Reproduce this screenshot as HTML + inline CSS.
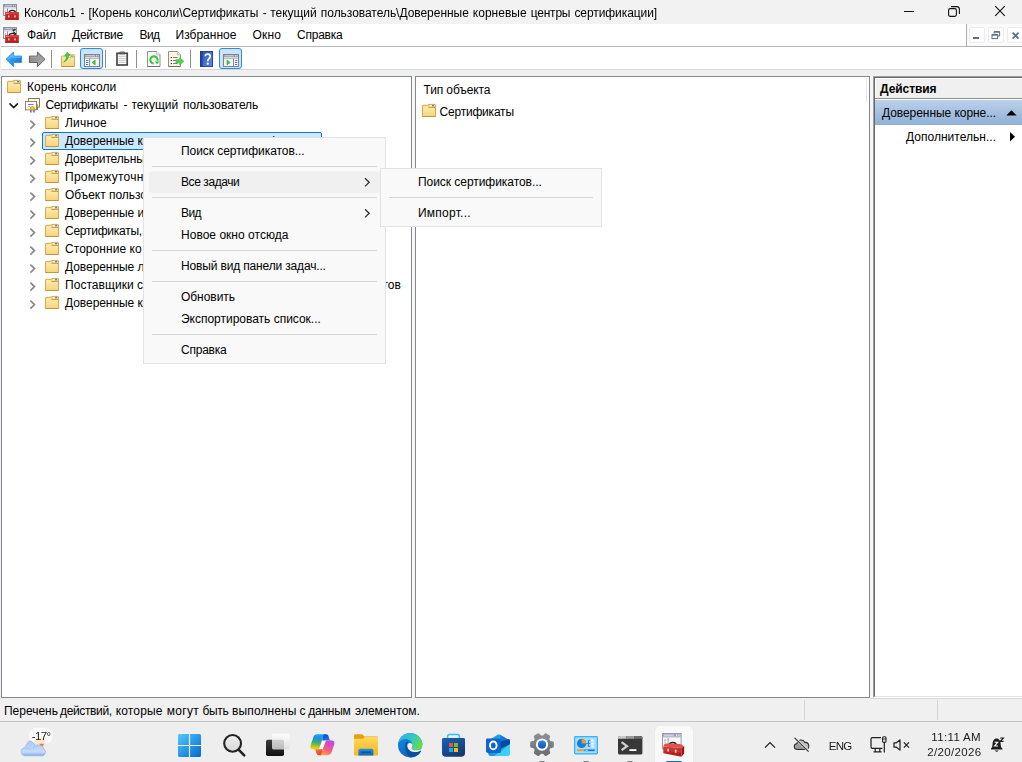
<!DOCTYPE html>
<html>
<head>
<meta charset="utf-8">
<title>mmc</title>
<style>
html,body{margin:0;padding:0;}
body{width:1022px;height:762px;overflow:hidden;background:#f0f0f0;font-family:"Liberation Sans",sans-serif;font-size:12px;color:#000;position:relative;}
.abs{position:absolute;}
.g{filter:grayscale(1);}
.t{position:absolute;white-space:nowrap;line-height:14px;height:14px;color:#000;}
#titlebar{left:0;top:0;width:1022px;height:24px;background:#f2f2f2;}
#menubar{left:1px;top:24px;width:1021px;height:22px;background:#fff;}
#menuline{left:1px;top:46px;width:966px;height:1px;background:#b9b9b9;}
#toolbar{left:1px;top:47px;width:1021px;height:22px;background:#fff;border-bottom:1px solid #d5d5d5;}
.pane{position:absolute;background:#fff;border:1px solid #828790;box-sizing:border-box;overflow:hidden;}
#left{left:1px;top:76px;width:411px;height:622px;}
#mid{left:415px;top:76px;width:455px;height:622px;}
#right{left:873px;top:76px;width:151px;height:622px;border:1px solid #a0a0a0;border-bottom-color:#fff;}
#status{left:0;top:700px;width:1022px;height:21px;background:#f0f0f0;}
#taskbar{left:0;top:721px;width:1022px;height:41px;background:#eeeeee;border-top:1px solid #c4c4c4;box-sizing:border-box;}
.menu{position:absolute;background:#f9f9f9;border:1px solid #e2e2e2;box-sizing:border-box;}
.sep{position:absolute;height:1px;background:#d7d7d7;}
svg{position:absolute;overflow:visible;}
</style>
</head>
<body>
<div id="titlebar" class="abs"></div>
<div id="menubar" class="abs"></div>
<div id="menuline" class="abs"></div>
<div id="toolbar" class="abs"></div>
<div id="left" class="pane"></div>
<div id="mid" class="pane"></div>
<div id="right" class="pane"></div>
<div class="abs" style="left:874px;top:77px;width:150px;height:620px;box-sizing:border-box;border:1px solid #696969;border-bottom-color:#e3e3e3;background:#fff;"></div>
<!-- right pane decorations -->
<div class="abs" style="left:875px;top:78px;width:147px;height:20px;background:#fff;"></div>
<div class="abs" style="left:876px;top:79px;width:146px;height:19px;background:#f0f0f0;"></div>
<div class="abs" style="left:866px;top:78px;width:1px;height:24px;background:#e8e8e8;"></div>
<div class="abs" style="left:875px;top:98px;width:147px;height:1px;background:#8c8c8c;"></div>
<div class="abs" style="left:875px;top:99px;width:147px;height:1px;background:#fff;"></div>
<div class="abs" style="left:875px;top:100px;width:147px;height:25px;background:linear-gradient(#bad1ea,#90b0d6);"></div>
<!-- selection -->
<div class="abs" style="left:42px;top:132px;width:280px;height:18px;box-sizing:border-box;background:#cce8ff;border:1px solid #0078d7;border-radius:2px;"></div>
<div id="status" class="abs"></div>
<div class="abs" style="left:804px;top:700px;width:1px;height:20px;background:#d4d4d4;"></div>
<div class="abs" style="left:937px;top:700px;width:1px;height:20px;background:#d4d4d4;"></div>
<div class="abs" style="left:870px;top:698px;width:152px;height:1px;background:#d8d8d8;"></div>
<div class="abs" style="left:870px;top:76px;width:3px;height:622px;background:#f6f6f6;"></div>
<div class="abs" style="left:412px;top:76px;width:3px;height:622px;background:#f6f6f6;"></div>
<div id="taskbar" class="abs"></div>
<svg width="0" height="0" style="left:0;top:0;"><defs>
<linearGradient id="gf" x1="0" y1="0" x2="0" y2="1"><stop offset="0" stop-color="#fdebb0"/><stop offset="1" stop-color="#f7d57d"/></linearGradient>
<linearGradient id="gb" x1="0" y1="0" x2="1" y2="1"><stop offset="0" stop-color="#5cc0ff"/><stop offset="0.6" stop-color="#1e8ee8"/><stop offset="1" stop-color="#0a62c4"/></linearGradient>
<linearGradient id="gg" x1="0" y1="0" x2="1" y2="1"><stop offset="0" stop-color="#7d7d7d"/><stop offset="1" stop-color="#b5b5b5"/></linearGradient>
<linearGradient id="gh" x1="0" y1="0" x2="1" y2="1"><stop offset="0" stop-color="#2c50b4"/><stop offset="1" stop-color="#5d8dea"/></linearGradient>
<linearGradient id="gw" x1="0" y1="0" x2="0" y2="1"><stop offset="0" stop-color="#4cc2ff"/><stop offset="1" stop-color="#0a78d4"/></linearGradient>
</defs></svg>
<svg style="left:7px;top:80px;" width="14" height="13" viewBox="0 0 14 13"><path d="M0.5 12.5 V1.9 Q0.5 1.3 1.1 1.3 H6.2 V0.9 Q6.2 0.4 6.8 0.4 H12.9 Q13.5 0.4 13.5 1 V12.5 Z" fill="#f3d27c" stroke="#d2ab52" stroke-width="1"/><path d="M1.1 2.3 H6.3 L7.1 4 H12.9 V12 H1.1 Z" fill="url(#gf)"/><path d="M6.4 3.5 H13.2" stroke="#c39c42" stroke-width="0.9"/><path d="M0.4 12.5 H13.6" stroke="#bf9740" stroke-width="1"/><rect x="7.8" y="1.15" width="2.2" height="1.1" fill="#fff"/><rect x="9.9" y="1.1" width="2.2" height="1.2" rx="0.6" fill="#3a84f2"/></svg>
<svg style="left:45px;top:116px;" width="14" height="13" viewBox="0 0 14 13"><path d="M0.5 12.5 V1.9 Q0.5 1.3 1.1 1.3 H6.2 V0.9 Q6.2 0.4 6.8 0.4 H12.9 Q13.5 0.4 13.5 1 V12.5 Z" fill="#f3d27c" stroke="#d2ab52" stroke-width="1"/><path d="M1.1 2.3 H6.3 L7.1 4 H12.9 V12 H1.1 Z" fill="url(#gf)"/><path d="M6.4 3.5 H13.2" stroke="#c39c42" stroke-width="0.9"/><path d="M0.4 12.5 H13.6" stroke="#bf9740" stroke-width="1"/><rect x="7.8" y="1.15" width="2.2" height="1.1" fill="#fff"/><rect x="9.9" y="1.1" width="2.2" height="1.2" rx="0.6" fill="#3a84f2"/></svg>
<svg style="left:45px;top:134px;" width="14" height="13" viewBox="0 0 14 13"><path d="M0.5 12.5 V1.9 Q0.5 1.3 1.1 1.3 H6.2 V0.9 Q6.2 0.4 6.8 0.4 H12.9 Q13.5 0.4 13.5 1 V12.5 Z" fill="#f3d27c" stroke="#d2ab52" stroke-width="1"/><path d="M1.1 2.3 H6.3 L7.1 4 H12.9 V12 H1.1 Z" fill="url(#gf)"/><path d="M6.4 3.5 H13.2" stroke="#c39c42" stroke-width="0.9"/><path d="M0.4 12.5 H13.6" stroke="#bf9740" stroke-width="1"/><rect x="7.8" y="1.15" width="2.2" height="1.1" fill="#fff"/><rect x="9.9" y="1.1" width="2.2" height="1.2" rx="0.6" fill="#3a84f2"/></svg>
<svg style="left:45px;top:152px;" width="14" height="13" viewBox="0 0 14 13"><path d="M0.5 12.5 V1.9 Q0.5 1.3 1.1 1.3 H6.2 V0.9 Q6.2 0.4 6.8 0.4 H12.9 Q13.5 0.4 13.5 1 V12.5 Z" fill="#f3d27c" stroke="#d2ab52" stroke-width="1"/><path d="M1.1 2.3 H6.3 L7.1 4 H12.9 V12 H1.1 Z" fill="url(#gf)"/><path d="M6.4 3.5 H13.2" stroke="#c39c42" stroke-width="0.9"/><path d="M0.4 12.5 H13.6" stroke="#bf9740" stroke-width="1"/><rect x="7.8" y="1.15" width="2.2" height="1.1" fill="#fff"/><rect x="9.9" y="1.1" width="2.2" height="1.2" rx="0.6" fill="#3a84f2"/></svg>
<svg style="left:45px;top:170px;" width="14" height="13" viewBox="0 0 14 13"><path d="M0.5 12.5 V1.9 Q0.5 1.3 1.1 1.3 H6.2 V0.9 Q6.2 0.4 6.8 0.4 H12.9 Q13.5 0.4 13.5 1 V12.5 Z" fill="#f3d27c" stroke="#d2ab52" stroke-width="1"/><path d="M1.1 2.3 H6.3 L7.1 4 H12.9 V12 H1.1 Z" fill="url(#gf)"/><path d="M6.4 3.5 H13.2" stroke="#c39c42" stroke-width="0.9"/><path d="M0.4 12.5 H13.6" stroke="#bf9740" stroke-width="1"/><rect x="7.8" y="1.15" width="2.2" height="1.1" fill="#fff"/><rect x="9.9" y="1.1" width="2.2" height="1.2" rx="0.6" fill="#3a84f2"/></svg>
<svg style="left:45px;top:188px;" width="14" height="13" viewBox="0 0 14 13"><path d="M0.5 12.5 V1.9 Q0.5 1.3 1.1 1.3 H6.2 V0.9 Q6.2 0.4 6.8 0.4 H12.9 Q13.5 0.4 13.5 1 V12.5 Z" fill="#f3d27c" stroke="#d2ab52" stroke-width="1"/><path d="M1.1 2.3 H6.3 L7.1 4 H12.9 V12 H1.1 Z" fill="url(#gf)"/><path d="M6.4 3.5 H13.2" stroke="#c39c42" stroke-width="0.9"/><path d="M0.4 12.5 H13.6" stroke="#bf9740" stroke-width="1"/><rect x="7.8" y="1.15" width="2.2" height="1.1" fill="#fff"/><rect x="9.9" y="1.1" width="2.2" height="1.2" rx="0.6" fill="#3a84f2"/></svg>
<svg style="left:45px;top:206px;" width="14" height="13" viewBox="0 0 14 13"><path d="M0.5 12.5 V1.9 Q0.5 1.3 1.1 1.3 H6.2 V0.9 Q6.2 0.4 6.8 0.4 H12.9 Q13.5 0.4 13.5 1 V12.5 Z" fill="#f3d27c" stroke="#d2ab52" stroke-width="1"/><path d="M1.1 2.3 H6.3 L7.1 4 H12.9 V12 H1.1 Z" fill="url(#gf)"/><path d="M6.4 3.5 H13.2" stroke="#c39c42" stroke-width="0.9"/><path d="M0.4 12.5 H13.6" stroke="#bf9740" stroke-width="1"/><rect x="7.8" y="1.15" width="2.2" height="1.1" fill="#fff"/><rect x="9.9" y="1.1" width="2.2" height="1.2" rx="0.6" fill="#3a84f2"/></svg>
<svg style="left:45px;top:224px;" width="14" height="13" viewBox="0 0 14 13"><path d="M0.5 12.5 V1.9 Q0.5 1.3 1.1 1.3 H6.2 V0.9 Q6.2 0.4 6.8 0.4 H12.9 Q13.5 0.4 13.5 1 V12.5 Z" fill="#f3d27c" stroke="#d2ab52" stroke-width="1"/><path d="M1.1 2.3 H6.3 L7.1 4 H12.9 V12 H1.1 Z" fill="url(#gf)"/><path d="M6.4 3.5 H13.2" stroke="#c39c42" stroke-width="0.9"/><path d="M0.4 12.5 H13.6" stroke="#bf9740" stroke-width="1"/><rect x="7.8" y="1.15" width="2.2" height="1.1" fill="#fff"/><rect x="9.9" y="1.1" width="2.2" height="1.2" rx="0.6" fill="#3a84f2"/></svg>
<svg style="left:45px;top:242px;" width="14" height="13" viewBox="0 0 14 13"><path d="M0.5 12.5 V1.9 Q0.5 1.3 1.1 1.3 H6.2 V0.9 Q6.2 0.4 6.8 0.4 H12.9 Q13.5 0.4 13.5 1 V12.5 Z" fill="#f3d27c" stroke="#d2ab52" stroke-width="1"/><path d="M1.1 2.3 H6.3 L7.1 4 H12.9 V12 H1.1 Z" fill="url(#gf)"/><path d="M6.4 3.5 H13.2" stroke="#c39c42" stroke-width="0.9"/><path d="M0.4 12.5 H13.6" stroke="#bf9740" stroke-width="1"/><rect x="7.8" y="1.15" width="2.2" height="1.1" fill="#fff"/><rect x="9.9" y="1.1" width="2.2" height="1.2" rx="0.6" fill="#3a84f2"/></svg>
<svg style="left:45px;top:260px;" width="14" height="13" viewBox="0 0 14 13"><path d="M0.5 12.5 V1.9 Q0.5 1.3 1.1 1.3 H6.2 V0.9 Q6.2 0.4 6.8 0.4 H12.9 Q13.5 0.4 13.5 1 V12.5 Z" fill="#f3d27c" stroke="#d2ab52" stroke-width="1"/><path d="M1.1 2.3 H6.3 L7.1 4 H12.9 V12 H1.1 Z" fill="url(#gf)"/><path d="M6.4 3.5 H13.2" stroke="#c39c42" stroke-width="0.9"/><path d="M0.4 12.5 H13.6" stroke="#bf9740" stroke-width="1"/><rect x="7.8" y="1.15" width="2.2" height="1.1" fill="#fff"/><rect x="9.9" y="1.1" width="2.2" height="1.2" rx="0.6" fill="#3a84f2"/></svg>
<svg style="left:45px;top:278px;" width="14" height="13" viewBox="0 0 14 13"><path d="M0.5 12.5 V1.9 Q0.5 1.3 1.1 1.3 H6.2 V0.9 Q6.2 0.4 6.8 0.4 H12.9 Q13.5 0.4 13.5 1 V12.5 Z" fill="#f3d27c" stroke="#d2ab52" stroke-width="1"/><path d="M1.1 2.3 H6.3 L7.1 4 H12.9 V12 H1.1 Z" fill="url(#gf)"/><path d="M6.4 3.5 H13.2" stroke="#c39c42" stroke-width="0.9"/><path d="M0.4 12.5 H13.6" stroke="#bf9740" stroke-width="1"/><rect x="7.8" y="1.15" width="2.2" height="1.1" fill="#fff"/><rect x="9.9" y="1.1" width="2.2" height="1.2" rx="0.6" fill="#3a84f2"/></svg>
<svg style="left:45px;top:296px;" width="14" height="13" viewBox="0 0 14 13"><path d="M0.5 12.5 V1.9 Q0.5 1.3 1.1 1.3 H6.2 V0.9 Q6.2 0.4 6.8 0.4 H12.9 Q13.5 0.4 13.5 1 V12.5 Z" fill="#f3d27c" stroke="#d2ab52" stroke-width="1"/><path d="M1.1 2.3 H6.3 L7.1 4 H12.9 V12 H1.1 Z" fill="url(#gf)"/><path d="M6.4 3.5 H13.2" stroke="#c39c42" stroke-width="0.9"/><path d="M0.4 12.5 H13.6" stroke="#bf9740" stroke-width="1"/><rect x="7.8" y="1.15" width="2.2" height="1.1" fill="#fff"/><rect x="9.9" y="1.1" width="2.2" height="1.2" rx="0.6" fill="#3a84f2"/></svg>
<svg style="left:422px;top:104px;" width="14" height="13" viewBox="0 0 14 13"><path d="M0.5 12.5 V1.9 Q0.5 1.3 1.1 1.3 H6.2 V0.9 Q6.2 0.4 6.8 0.4 H12.9 Q13.5 0.4 13.5 1 V12.5 Z" fill="#f3d27c" stroke="#d2ab52" stroke-width="1"/><path d="M1.1 2.3 H6.3 L7.1 4 H12.9 V12 H1.1 Z" fill="url(#gf)"/><path d="M6.4 3.5 H13.2" stroke="#c39c42" stroke-width="0.9"/><path d="M0.4 12.5 H13.6" stroke="#bf9740" stroke-width="1"/><rect x="7.8" y="1.15" width="2.2" height="1.1" fill="#fff"/><rect x="9.9" y="1.1" width="2.2" height="1.2" rx="0.6" fill="#3a84f2"/></svg>
<svg style="left:8px;top:100px;" width="12" height="10" viewBox="0 0 12 10"><path d="M1.5 3.4 L5.7 7.6 L9.9 3.4" fill="none" stroke="#1a1a1a" stroke-width="1.6"/></svg>
<svg style="left:28px;top:119px;" width="10" height="11" viewBox="0 0 10 11"><path d="M2.4 1.6 L6.5 5.6 L2.4 9.6" fill="none" stroke="#868686" stroke-width="1.6"/></svg>
<svg style="left:28px;top:137px;" width="10" height="11" viewBox="0 0 10 11"><path d="M2.4 1.6 L6.5 5.6 L2.4 9.6" fill="none" stroke="#868686" stroke-width="1.6"/></svg>
<svg style="left:28px;top:155px;" width="10" height="11" viewBox="0 0 10 11"><path d="M2.4 1.6 L6.5 5.6 L2.4 9.6" fill="none" stroke="#868686" stroke-width="1.6"/></svg>
<svg style="left:28px;top:173px;" width="10" height="11" viewBox="0 0 10 11"><path d="M2.4 1.6 L6.5 5.6 L2.4 9.6" fill="none" stroke="#868686" stroke-width="1.6"/></svg>
<svg style="left:28px;top:191px;" width="10" height="11" viewBox="0 0 10 11"><path d="M2.4 1.6 L6.5 5.6 L2.4 9.6" fill="none" stroke="#868686" stroke-width="1.6"/></svg>
<svg style="left:28px;top:209px;" width="10" height="11" viewBox="0 0 10 11"><path d="M2.4 1.6 L6.5 5.6 L2.4 9.6" fill="none" stroke="#868686" stroke-width="1.6"/></svg>
<svg style="left:28px;top:227px;" width="10" height="11" viewBox="0 0 10 11"><path d="M2.4 1.6 L6.5 5.6 L2.4 9.6" fill="none" stroke="#868686" stroke-width="1.6"/></svg>
<svg style="left:28px;top:245px;" width="10" height="11" viewBox="0 0 10 11"><path d="M2.4 1.6 L6.5 5.6 L2.4 9.6" fill="none" stroke="#868686" stroke-width="1.6"/></svg>
<svg style="left:28px;top:263px;" width="10" height="11" viewBox="0 0 10 11"><path d="M2.4 1.6 L6.5 5.6 L2.4 9.6" fill="none" stroke="#868686" stroke-width="1.6"/></svg>
<svg style="left:28px;top:281px;" width="10" height="11" viewBox="0 0 10 11"><path d="M2.4 1.6 L6.5 5.6 L2.4 9.6" fill="none" stroke="#868686" stroke-width="1.6"/></svg>
<svg style="left:28px;top:299px;" width="10" height="11" viewBox="0 0 10 11"><path d="M2.4 1.6 L6.5 5.6 L2.4 9.6" fill="none" stroke="#868686" stroke-width="1.6"/></svg>
<svg style="left:25px;top:97px;" width="16" height="16" viewBox="0 0 16 16">
<rect x="3.5" y="1.5" width="11" height="8.5" fill="#fff" stroke="#8d775b" stroke-width="1"/>
<rect x="11.4" y="9.6" width="1.5" height="3.2" fill="#1f5fe8"/>
<ellipse cx="12" cy="8.4" rx="1.2" ry="1.9" fill="#e8a21c"/>
<rect x="0.5" y="4.5" width="11" height="8.3" fill="#fdfdfd" stroke="#96805f" stroke-width="1"/>
<rect x="3" y="7" width="5.5" height="1" fill="#6b7fd8"/><rect x="3" y="9" width="2" height="1" fill="#9fb0ea"/>
<path d="M5 12.6 H6.8 V15.6 H5.2 Z M8 12.6 H9.8 L9.6 15.6 H8 Z" fill="#1f5fe8"/>
<path d="M6.6 14.4 L7.4 13.4 L8.2 14.4 V15.8 H6.6Z" fill="#fff"/>
<circle cx="7.4" cy="11.4" r="2.5" fill="#e9a21a"/><circle cx="7.4" cy="11.3" r="1.2" fill="#f6c85a"/>
</svg>
<svg style="left:5px;top:51px;" width="18" height="17" viewBox="0 0 18 17"><path d="M1 8.3 L8.6 1 V5.1 H16.6 V11.5 H8.6 V15.7 Z" fill="url(#gb)" stroke="#3a93de" stroke-width="1" stroke-linejoin="round"/><path d="M3.2 8.2 L7.8 3.8 V6.1 H15.6" fill="none" stroke="#8fd4ff" stroke-width="0.9" opacity="0.8"/></svg>
<svg style="left:28px;top:51px;" width="18" height="17" viewBox="0 0 18 17"><path d="M17 8.3 L9.4 1 V5.1 H1.4 V11.5 H9.4 V15.7 Z" fill="url(#gg)" stroke="#606060" stroke-width="1" stroke-linejoin="round"/><path d="M2.4 6.1 H10.3 V3.6" fill="none" stroke="#c9c9c9" stroke-width="0.8" opacity="0.7"/></svg>
<div class="abs" style="left:51px;top:50px;width:1px;height:18px;background:#8e8e8e;"></div>
<div class="abs" style="left:105px;top:50px;width:1px;height:18px;background:#8e8e8e;"></div>
<div class="abs" style="left:136px;top:50px;width:1px;height:18px;background:#8e8e8e;"></div>
<div class="abs" style="left:190px;top:50px;width:1px;height:18px;background:#8e8e8e;"></div>
<svg style="left:61px;top:51px;" width="15" height="16" viewBox="0 0 15 16"><path d="M0.5 15.5 V5.6 Q0.5 5 1.1 5 H7 L8.2 3.8 H12.9 Q13.5 3.8 13.5 4.4 V15.5 Z" fill="url(#gf)" stroke="#d2ad55" stroke-width="1"/><path d="M0.5 15.5 H13.5" stroke="#b8923c" stroke-width="1"/><rect x="9.5" y="4.6" width="3" height="1.1" fill="#5b9bf0"/><path d="M7 6.4 H13" stroke="#e3c26e" stroke-width="1"/>
<path d="M2.6 11 C5.2 9.6 5.6 7 5.4 4.6 L3.8 5 L6.2 1.2 L9 4.4 L7.3 4.3 C7.6 7.4 6 10.2 2.6 11 Z" fill="#46d646" stroke="#2aa52a" stroke-width="0.6"/></svg>
<div class="abs" style="left:80px;top:48px;width:23px;height:21px;box-sizing:border-box;background:#cce4f7;border:1px solid #2b8de0;border-radius:3px;"></div>
<div class="abs" style="left:219px;top:48px;width:23px;height:21px;box-sizing:border-box;background:#cce4f7;border:1px solid #2b8de0;border-radius:3px;"></div>
<svg style="left:84px;top:54px;" width="16" height="13" viewBox="0 0 16 13"><rect x="0.5" y="0.5" width="15" height="12" fill="#fdfdfd" stroke="#7d8290" stroke-width="1"/><rect x="1" y="1" width="14" height="3.6" fill="#8f94a0"/><rect x="1.5" y="1.4" width="9.5" height="0.9" fill="#e8e8ec"/><rect x="12" y="1.3" width="1" height="1" fill="#fff"/><rect x="13.7" y="1.3" width="1" height="1" fill="#fff"/><rect x="1" y="3.1" width="14" height="0.9" fill="#e1e3e8"/><rect x="5.2" y="4.6" width="1" height="8" fill="#7d8290"/><rect x="2" y="6" width="2.2" height="1" fill="#3c78d8"/><rect x="2" y="8" width="2.2" height="1" fill="#3c78d8"/><rect x="2" y="10" width="2.2" height="1" fill="#3c78d8"/><rect x="6.5" y="5" width="8.5" height="7" fill="#f4f4f4"/><path d="M11.2 6 V11 L8 8.5 Z" fill="#3fc43f" stroke="#2ea32e" stroke-width="0.5"/></svg>
<svg style="left:223px;top:54px;" width="16" height="13" viewBox="0 0 16 13"><rect x="0.5" y="0.5" width="15" height="12" fill="#fdfdfd" stroke="#7d8290" stroke-width="1"/><rect x="1" y="1" width="14" height="3.6" fill="#8f94a0"/><rect x="1.5" y="1.4" width="9.5" height="0.9" fill="#e8e8ec"/><rect x="12" y="1.3" width="1" height="1" fill="#fff"/><rect x="13.7" y="1.3" width="1" height="1" fill="#fff"/><rect x="1" y="3.1" width="14" height="0.9" fill="#e1e3e8"/><rect x="10" y="4.6" width="1" height="8" fill="#7d8290"/><rect x="12" y="6" width="2.2" height="1" fill="#3c78d8"/><rect x="12" y="8" width="2.2" height="1" fill="#3c78d8"/><rect x="12" y="10" width="2.2" height="1" fill="#3c78d8"/><rect x="1" y="5" width="8.7" height="7" fill="#f4f4f4"/><path d="M4 6 V11 L7.2 8.5 Z" fill="#3fc43f" stroke="#2ea32e" stroke-width="0.5"/></svg>
<svg style="left:116px;top:51px;" width="13" height="15" viewBox="0 0 13 15"><rect x="1" y="2.3" width="10.2" height="11.7" fill="#fff" stroke="#484848" stroke-width="1.7"/><rect x="3.3" y="0.8" width="5.6" height="2.6" fill="#5a5a5a"/><rect x="4.1" y="0.5" width="4" height="0.9" fill="#8a8a8a"/><path d="M2.4 5.3 H9.8 M2.4 7.3 H9.8 M2.4 9.3 H9.8 M2.4 11.3 H9.8" stroke="#bdbdbd" stroke-width="0.9"/></svg>
<svg style="left:147px;top:51px;" width="14" height="16" viewBox="0 0 14 16"><path d="M0.5 0.5 H9.8 L13 3.8 V15.5 H0.5 Z" fill="#fafafa" stroke="#8e8e8e" stroke-width="1"/><path d="M9.8 0.5 V3.8 H13" fill="#fff" stroke="#a5a5a5" stroke-width="0.8"/><path d="M0.5 15.5 H13" stroke="#6f6f6f" stroke-width="1"/>
<path d="M10.4 9.8 A3.6 3.6 0 1 0 6.6 12.5" fill="none" stroke="#36c636" stroke-width="2.1"/><path d="M7.8 10.4 H12.4 L10 13.2 Z" fill="#2fc02f"/></svg>
<svg style="left:168px;top:51px;" width="17" height="16" viewBox="0 0 17 16"><path d="M0.5 0.5 H9.4 L12.5 3.8 V15.5 H0.5 Z" fill="#fdf6df" stroke="#909090" stroke-width="1"/><path d="M9.4 0.5 V3.8 H12.5" fill="#fff" stroke="#a5a5a5" stroke-width="0.8"/><path d="M0.5 15.5 H12.5" stroke="#6f6f6f" stroke-width="1"/>
<rect x="2.8" y="6" width="1.1" height="1.1" fill="#222"/><rect x="2.8" y="9" width="1.1" height="1.1" fill="#222"/><rect x="2.8" y="12" width="1.1" height="1.1" fill="#222"/>
<rect x="5" y="6.1" width="4.6" height="0.9" fill="#6a6aa8"/><rect x="5" y="9.1" width="4.6" height="0.9" fill="#6a6aa8"/><rect x="5" y="12.1" width="4.6" height="0.9" fill="#6a6aa8"/>
<path d="M7.9 8.6 H11.6 V6.6 L16 10.3 L11.6 14 V12 H7.9 Z" fill="#4fd24f" stroke="#39b839" stroke-width="0.5"/></svg>
<svg style="left:200px;top:51px;" width="13" height="16" viewBox="0 0 13 16"><rect x="0" y="0" width="13" height="16" fill="url(#gh)"/><rect x="0" y="0" width="2.8" height="16" fill="#23409c" opacity="0.85"/><rect x="0.4" y="0.4" width="12.2" height="15.2" fill="none" stroke="#1f3a96" stroke-width="0.8"/>
<path d="M5.2 5.2 C5.2 2.4 10.2 2.4 10.2 5.4 C10.2 7.6 7.7 7.6 7.7 10.2" fill="none" stroke="#fff" stroke-width="1.7"/><circle cx="7.7" cy="12.7" r="1.1" fill="#fff"/></svg><svg style="left:3px;top:4px;" width="17" height="17" viewBox="0 0 17 17">
<rect x="0.5" y="0.5" width="13" height="11" fill="#f6f7fa" stroke="#8c92a0" stroke-width="1"/>
<rect x="1" y="1" width="12" height="3.2" fill="#808aa6"/><rect x="1.6" y="1.4" width="7.6" height="0.9" fill="#e9ebf0"/><rect x="10" y="1.3" width="1" height="1" fill="#fff"/><rect x="11.8" y="1.3" width="1" height="1" fill="#fff"/><rect x="1" y="3" width="12" height="0.9" fill="#e4e6ec"/>
<rect x="4" y="4.4" width="1" height="7" fill="#8c92a0"/><rect x="1.8" y="6.6" width="1.4" height="0.9" fill="#7f89a8"/>
<path d="M6 8.6 C6.6 5.6 12 5.6 12.6 8.6" fill="none" stroke="#1a1a1a" stroke-width="1.3"/>

<path d="M2.2 9 Q2.2 8 3.2 8 H14.6 Q15.8 8 15.8 9.2 V15.7 H2.2 Z" fill="#c82222"/>
<path d="M2.2 9 Q2.2 8 3.2 8 H14.6 Q15.8 8 15.8 9.2 V10.2 H2.2 Z" fill="#dc3c38"/>
<rect x="2.2" y="14.6" width="13.6" height="1.1" fill="#a51313"/>
<rect x="3" y="9.2" width="3" height="0.8" fill="#f39a95" opacity="0.9"/>
<rect x="5" y="11.2" width="1.6" height="2.4" rx="0.5" fill="#9aa0a8"/><rect x="5.4" y="11.6" width="0.8" height="1.6" fill="#e3e5e8"/>
<rect x="11.2" y="11.2" width="1.6" height="2.4" rx="0.5" fill="#9aa0a8"/><rect x="11.6" y="11.6" width="0.8" height="1.6" fill="#e3e5e8"/>
</svg>
<svg style="left:3px;top:27px;" width="17" height="17" viewBox="0 0 17 17">
<rect x="0.5" y="0.5" width="13" height="11" fill="#f6f7fa" stroke="#8c92a0" stroke-width="1"/>
<rect x="1" y="1" width="12" height="3.2" fill="#808aa6"/><rect x="1.6" y="1.4" width="7.6" height="0.9" fill="#e9ebf0"/><rect x="10" y="1.3" width="1" height="1" fill="#fff"/><rect x="11.8" y="1.3" width="1" height="1" fill="#fff"/><rect x="1" y="3" width="12" height="0.9" fill="#e4e6ec"/>
<rect x="4" y="4.4" width="1" height="7" fill="#8c92a0"/><rect x="1.8" y="6.6" width="1.4" height="0.9" fill="#7f89a8"/>
<path d="M6 8.6 C6.6 5.6 12 5.6 12.6 8.6" fill="none" stroke="#1a1a1a" stroke-width="1.3"/>
<path d="M9.6 3.4 L12.6 2.6 M10.2 4.6 L12.8 6.8 M9.6 9.6 H12.6" stroke="#111" stroke-width="1.1" fill="none"/>
<path d="M2.2 9 Q2.2 8 3.2 8 H14.6 Q15.8 8 15.8 9.2 V15.7 H2.2 Z" fill="#c82222"/>
<path d="M2.2 9 Q2.2 8 3.2 8 H14.6 Q15.8 8 15.8 9.2 V10.2 H2.2 Z" fill="#dc3c38"/>
<rect x="2.2" y="14.6" width="13.6" height="1.1" fill="#a51313"/>
<rect x="3" y="9.2" width="3" height="0.8" fill="#f39a95" opacity="0.9"/>
<rect x="5" y="11.2" width="1.6" height="2.4" rx="0.5" fill="#9aa0a8"/><rect x="5.4" y="11.6" width="0.8" height="1.6" fill="#e3e5e8"/>
<rect x="11.2" y="11.2" width="1.6" height="2.4" rx="0.5" fill="#9aa0a8"/><rect x="11.6" y="11.6" width="0.8" height="1.6" fill="#e3e5e8"/>
</svg>
<div class="abs" style="left:904px;top:11px;width:10px;height:1px;background:#111;"></div>
<svg style="left:948px;top:6px;" width="12" height="11" viewBox="0 0 12 11"><rect x="0.6" y="2.6" width="7.8" height="7.8" rx="1.6" fill="none" stroke="#111" stroke-width="1.1"/><path d="M3 0.6 H8.6 Q11.4 0.6 11.4 3.4 V8" fill="none" stroke="#111" stroke-width="1.1"/></svg>
<svg style="left:995px;top:6px;" width="10" height="10" viewBox="0 0 10 10"><path d="M0.2 0.2 L9.8 9.8 M9.8 0.2 L0.2 9.8" stroke="#111" stroke-width="1.1"/></svg>
<div class="abs" style="left:967px;top:24px;width:55px;height:22px;background:#fafafa;"></div>
<div class="abs" style="left:966px;top:24px;width:1px;height:23px;background:#adadad;"></div>
<div class="abs" style="left:967px;top:46px;width:55px;height:1px;background:#adadad;"></div>
<div class="abs" style="left:969px;top:27px;width:16px;height:16px;box-sizing:border-box;background:#fdfdfd;border:1px solid #ececec;border-radius:2px;"></div>
<div class="abs" style="left:988px;top:27px;width:16px;height:16px;box-sizing:border-box;background:#fdfdfd;border:1px solid #ececec;border-radius:2px;"></div>
<div class="abs" style="left:1007px;top:27px;width:16px;height:16px;box-sizing:border-box;background:#fdfdfd;border:1px solid #ececec;border-radius:2px;"></div>
<div class="abs" style="left:973px;top:37px;width:6px;height:2px;background:#5d6e85;"></div>
<svg style="left:991px;top:31px;" width="10" height="9" viewBox="0 0 10 9"><path d="M3.2 2.6 V0.6 H8.6 V5 H7" fill="none" stroke="#5d6e85" stroke-width="1"/><path d="M3.2 1 H8.6" stroke="#5d6e85" stroke-width="1.4"/><rect x="1" y="3.6" width="5.6" height="4" fill="none" stroke="#5d6e85" stroke-width="1"/><path d="M1 3.9 H6.6" stroke="#5d6e85" stroke-width="1.5"/></svg>
<svg style="left:1012px;top:32px;" width="8" height="8" viewBox="0 0 8 8"><path d="M0.6 0.6 L6.6 6.6 M6.6 0.6 L0.6 6.6" stroke="#5d6e85" stroke-width="1.7"/></svg>
<svg style="left:1006px;top:110px;" width="11" height="6" viewBox="0 0 11 6"><path d="M0.3 5.5 L5.5 0.3 L10.7 5.5 Z" fill="#000"/></svg>
<svg style="left:1010px;top:132px;" width="5" height="10" viewBox="0 0 5 10"><path d="M0 0 L5 4.7 L0 9.4 Z" fill="#000"/></svg><svg width="0" height="0" style="left:0;top:0;"><defs>
<linearGradient id="tw" x1="0" y1="0" x2="1" y2="1"><stop offset="0" stop-color="#52c8ff"/><stop offset="1" stop-color="#0568cc"/></linearGradient>
<linearGradient id="tc" x1="0" y1="0" x2="0" y2="1"><stop offset="0" stop-color="#a9c8f6"/><stop offset="0.75" stop-color="#c7dbf8"/><stop offset="1" stop-color="#7fa8ee"/></linearGradient>
<linearGradient id="ts" x1="0" y1="0" x2="0" y2="1"><stop offset="0" stop-color="#f2f2f2"/><stop offset="1" stop-color="#d6d6d6"/></linearGradient>
<linearGradient id="tv1" x1="0" y1="0" x2="0" y2="1"><stop offset="0" stop-color="#3c3c3c"/><stop offset="1" stop-color="#101010"/></linearGradient>
<linearGradient id="tv2" x1="0" y1="0" x2="0" y2="1"><stop offset="0" stop-color="#ffffff"/><stop offset="1" stop-color="#dedede"/></linearGradient>
<linearGradient id="cp1" x1="0.4" y1="0" x2="0.3" y2="1"><stop offset="0" stop-color="#10a4fb"/><stop offset="0.25" stop-color="#1f8fe0"/><stop offset="0.55" stop-color="#3fae6a"/><stop offset="0.85" stop-color="#c9c81e"/><stop offset="1" stop-color="#fbd400"/></linearGradient>
<linearGradient id="cp2" x1="0.75" y1="0" x2="0.35" y2="1"><stop offset="0" stop-color="#b04cfb"/><stop offset="0.3" stop-color="#d850b0"/><stop offset="0.6" stop-color="#f35a8a"/><stop offset="1" stop-color="#fda04a"/></linearGradient>
<linearGradient id="cp3" x1="0" y1="0" x2="0.6" y2="1"><stop offset="0" stop-color="#1530c8"/><stop offset="1" stop-color="#1e7cea"/></linearGradient>
<linearGradient id="cp4" x1="0" y1="0" x2="1" y2="0.8"><stop offset="0" stop-color="#ff8a3c"/><stop offset="1" stop-color="#e6322a"/></linearGradient>
<linearGradient id="ex1" x1="0" y1="0" x2="0" y2="1"><stop offset="0" stop-color="#ffd85c"/><stop offset="1" stop-color="#f7b520"/></linearGradient>
<linearGradient id="ex2" x1="0" y1="0" x2="0" y2="1"><stop offset="0" stop-color="#1f93e6"/><stop offset="1" stop-color="#0d67bd"/></linearGradient>
<linearGradient id="ed1" x1="0" y1="0.2" x2="1" y2="0.6"><stop offset="0" stop-color="#2db4f2"/><stop offset="0.5" stop-color="#2fc6c6"/><stop offset="0.8" stop-color="#4dd67a"/><stop offset="1" stop-color="#66e040"/></linearGradient>
<linearGradient id="ed2" x1="0" y1="0" x2="0.3" y2="1"><stop offset="0" stop-color="#1c93e4"/><stop offset="1" stop-color="#0a63c6"/></linearGradient>
<linearGradient id="st1" x1="0" y1="0" x2="0.6" y2="1"><stop offset="0" stop-color="#1762b8"/><stop offset="1" stop-color="#173a72"/></linearGradient>
<linearGradient id="gr1" x1="0" y1="0" x2="0" y2="1"><stop offset="0" stop-color="#8a9199"/><stop offset="1" stop-color="#666d76"/></linearGradient>
<linearGradient id="gr2" x1="0" y1="0" x2="0" y2="1"><stop offset="0" stop-color="#2f86e4"/><stop offset="1" stop-color="#0f55b4"/></linearGradient>
<linearGradient id="tb1" x1="0" y1="0" x2="0" y2="1"><stop offset="0" stop-color="#dc3a36"/><stop offset="1" stop-color="#a81616"/></linearGradient>
</defs></svg>
<svg style="left:20px;top:726px;" width="36" height="32" viewBox="0 0 36 32">
<rect x="8.8" y="1.8" width="24.2" height="16" rx="8" fill="#f9f9f9"/>
<circle cx="20" cy="17" r="5.5" fill="#fbe6cf" opacity="0.95"/>
<path d="M19 17.8 H24 L23 20 H21 Z" fill="#f47a12"/>
<path d="M5 29.8 C0 29.8 -0.4 22 5 21.6 C6.4 17 9 14.6 10.4 15 C12 15.3 14.4 17.6 16 20.6 C18 18.4 23.6 18.8 24 23.2 C26.6 25 25.6 29.8 21.6 29.8 Z" fill="url(#tc)" stroke="#86aef0" stroke-width="0.6"/>
<path d="M5.8 22.4 C8 21.6 10 22.4 10.8 23.8 M13.4 22.8 C14 20 16 18.6 18 18.4" fill="none" stroke="#9dbcf2" stroke-width="0.7"/>
</svg>
<svg style="left:178px;top:734px;" width="23" height="23" viewBox="0 0 23 23"><path d="M1.6 0 H10.9 V10.9 H0 V1.6 Q0 0 1.6 0 Z M12.1 0 H21.4 Q23 0 23 1.6 V10.9 H12.1 Z M0 12.1 H10.9 V23 H1.6 Q0 23 0 21.4 Z M12.1 12.1 H23 V21.4 Q23 23 21.4 23 H12.1 Z" fill="url(#tw)"/></svg>
<svg style="left:221px;top:732px;" width="26" height="26" viewBox="0 0 26 26"><circle cx="11.6" cy="11.4" r="8.4" fill="url(#ts)" stroke="#222" stroke-width="2.1"/><path d="M17.8 17.8 L23.2 23.4" stroke="#222" stroke-width="2.6" stroke-linecap="round"/></svg>
<svg style="left:265px;top:733px;" width="26" height="24" viewBox="0 0 26 24"><rect x="1" y="6.8" width="18" height="16.2" rx="1.8" fill="url(#tv1)"/><rect x="7" y="0.7" width="17.6" height="15.7" rx="1.4" fill="url(#tv2)" opacity="0.82"/></svg>
<svg style="left:309.6px;top:733.6px;" width="25" height="22" viewBox="0 0 25 22">
<path d="M12.4 6.4 H16 L12.8 15.3 H9.2 Z" fill="#fdfdfd"/>
<path d="M13.2 0.3 H16 C17.8 0.3 18.4 1.6 18.8 3 L19.4 5 C19.6 5.8 20.4 6.3 21.2 6.4 H12.2 Z" fill="url(#cp3)"/>
<path d="M7.4 0.3 H15.2 C14 0.5 13.6 1.4 13.2 2.6 L9.6 13.4 C9.2 14.6 8.4 15.3 7 15.3 H3.2 C0.8 15.3 -0.2 13.6 0.6 11.2 L3.4 3 C4 1.2 5.2 0.3 7.4 0.3 Z" fill="url(#cp1)"/>
<path d="M11.4 21.3 H9 C7.2 21.3 6.6 20 6.2 18.6 L5.6 16.6 C5.4 15.8 4.8 15.4 4 15.3 H12.8 Z" fill="url(#cp4)"/>
<path d="M17.4 21.3 H9.6 C10.8 21.1 11.2 20.2 11.6 19 L15.2 8.2 C15.6 7 16.4 6.4 17.8 6.4 H21.6 C24 6.4 25 8 24.2 10.4 L21.4 18.6 C20.8 20.4 19.6 21.3 17.4 21.3 Z" fill="url(#cp2)"/>
</svg>
<svg style="left:354px;top:734px;" width="24" height="22" viewBox="0 0 24 22">
<path d="M0 1.4 Q0 0.2 1.2 0.2 H7.4 Q8.2 0.2 8.8 0.8 L10.4 2.4 H22.8 Q24 2.4 24 3.6 V6 H0 Z" fill="#e3a010"/>
<path d="M0 4.8 H8 Q8.8 4.8 9.4 4.2 L10.6 3 H22.8 Q24 3 24 4.2 V20.4 Q24 21.4 23 21.4 H1 Q0 21.4 0 20.4 Z" fill="url(#ex1)"/>
<path d="M4.4 21.4 V16.6 Q4.4 14.8 6.2 14.8 H17.6 Q19.4 14.8 19.4 16.6 V21.4 Z" fill="url(#ex2)"/>
<rect x="6.6" y="17.4" width="10.6" height="1.6" rx="0.8" fill="#0a55a0"/>
</svg>
<svg style="left:398px;top:732.7px;" width="24.4" height="24.4" viewBox="0 0 24 24">
<circle cx="12" cy="12" r="12" fill="url(#ed2)"/>
<path d="M0.2 10.4 C1.2 3.8 6.4 0 12 0 C19 0 24 5.4 24 11.4 C24 15 21.6 17 18 17 C15.4 17 13.5 16.2 13.3 15 C13.2 14.2 14.3 13.8 14.3 12 C14.3 8.4 11 5.9 7.2 5.9 C4 5.9 1.4 7.6 0.2 10.4 Z" fill="url(#ed1)"/>
<path d="M7 12.6 C7 9.4 9 8 10.4 7.8 C9.4 9 9 10 9 11.4 C9 16 13 18.8 17 18.8 C19 18.8 20.6 18.3 21.8 17.5 C22.6 17.1 23 17.6 22.6 18.3 C20.6 21.8 16.8 24 12.6 24 C9.2 22.6 7 17.6 7 12.6 Z" fill="#0d4f9f"/>
<path d="M9.2 12.7 C9.2 10.8 10.5 9.9 11.8 9.9 C13.3 9.9 14.3 10.9 14.3 12.2 C14.3 13.7 13.3 14.2 13.3 15 C13.5 16.2 15.4 17 18 17 C19.6 17 21 16.7 22 16.1 L21.8 17.5 C20.6 18.3 19 18.8 17 18.8 C13 18.8 9.2 16.4 9.2 12.7 Z" fill="#f4f2f0"/>
<path d="M22 16.1 C23 15.4 23.8 14 24 12 L25.2 12 L25.2 19.4 L22.6 18.3 C23 17.6 22.6 17.1 21.8 17.5 Z" fill="#eeeeee"/>
</svg>
<svg style="left:442px;top:734px;" width="23" height="23" viewBox="0 0 23 23">
<path d="M5.6 5 V2.6 Q5.6 0.6 7.6 0.6 H15.4 Q17.4 0.6 17.4 2.6 V5" fill="none" stroke="#2fc3fb" stroke-width="1.5"/>
<path d="M0 5.4 Q0 4 1.4 4 H21.6 Q23 4 23 5.4 V19 Q23 22.8 19.2 22.8 H3.8 Q0 22.8 0 19 Z" fill="url(#st1)"/>
<rect x="7" y="9" width="4" height="4" fill="#f0502a"/><rect x="12" y="9" width="4" height="4" fill="#80ba1a"/><rect x="7" y="14" width="4" height="4" fill="#1aa6f0"/><rect x="12" y="14" width="4" height="4" fill="#fbba14"/>
</svg>
<svg style="left:486px;top:734px;" width="24" height="22" viewBox="0 0 24 22">
<path d="M2.4 6.6 L12 0.6 Q12.8 0.2 13.6 0.6 L23.2 6.2 Q24 6.8 24 7.8 V19.6 Q24 21.8 21.8 21.8 H4.6 Q2.4 21.8 2.4 19.6 Z" fill="#1e9fea"/>
<path d="M13.6 0.6 L23.2 6.2 Q24 6.8 24 7.8 V9 L14.6 13 V1.4 Z" fill="#1278d8"/>
<path d="M14.6 7.6 L23.4 4.9 Q24 5.8 24 7 V10.2 L14.6 14.8 Z" fill="#0a48a6"/>
<path d="M24 10.2 V19.6 Q24 21.8 21.8 21.8 H8.6 Z" fill="#3ad2fb"/>
<path d="M2.4 17 L9.4 21.8 H4.6 Q2.4 21.8 2.4 19.6 Z" fill="#1a90de"/>
<rect x="0.6" y="5" width="14.6" height="14" rx="1.2" fill="#0a3f86" opacity="0.55"/>
<rect x="0" y="4.4" width="14.6" height="14" rx="1.2" fill="#1066c8"/>
<ellipse cx="7.3" cy="11.4" rx="3.3" ry="3.9" fill="none" stroke="#fff" stroke-width="1.9"/>
</svg>
<svg style="left:530px;top:733.3px;" width="24" height="24" viewBox="0 0 24 24"><path d="M15.61 1.10 L19.28 3.22 L18.45 6.38 L19.75 8.63 L22.90 9.48 L22.90 13.72 L19.75 14.57 L18.45 16.82 L19.28 19.98 L15.61 22.10 L13.30 19.80 L10.70 19.80 L8.39 22.10 L4.72 19.98 L5.55 16.82 L4.25 14.57 L1.10 13.72 L1.10 9.48 L4.25 8.63 L5.55 6.38 L4.72 3.22 L8.39 1.10 L10.70 3.40 L13.30 3.40Z" fill="url(#gr1)" stroke="url(#gr1)" stroke-width="1.8" stroke-linejoin="round"/><circle cx="12" cy="11.6" r="6.1" fill="#fff"/><circle cx="12" cy="11.6" r="4.1" fill="url(#gr2)"/></svg>
<svg style="left:574px;top:736px;" width="24" height="19" viewBox="0 0 24 19">
<rect x="0" y="0" width="24" height="18.4" rx="1.4" fill="#37b4fb"/>
<rect x="1.3" y="1.3" width="21.4" height="15.8" fill="#a6dcff"/>
<circle cx="7.6" cy="7.4" r="4.6" fill="#1180e0"/>
<path d="M7.6 7.4 V2.8 A4.6 4.6 0 0 1 12.2 7.4 Z" fill="#f59a14"/>
<path d="M12.4 7.4 H14.4 V4.4 H16.4 M14.4 7.4 H16.4 M14.4 7.4 V10.4 H16.4" fill="none" stroke="#1478d0" stroke-width="0.9"/>
<rect x="16.6" y="3.4" width="3.6" height="2" rx="1" fill="#e8f6ff"/><rect x="16.6" y="6.4" width="3.6" height="2" rx="1" fill="#e8f6ff"/><rect x="16.6" y="9.4" width="3.6" height="2" rx="1" fill="#e8f6ff"/>
<rect x="3" y="13.4" width="7.4" height="1.8" fill="#f59a14"/><rect x="10.4" y="13.4" width="10.4" height="1.8" fill="#1180e0"/><rect x="11.6" y="13.8" width="2" height="1" fill="#d4ecff"/>
</svg>
<svg style="left:618px;top:736px;" width="25" height="19" viewBox="0 0 25 19">
<rect x="0" y="0" width="24.4" height="18.6" rx="1.6" fill="#383838"/>
<path d="M0 1.6 Q0 0 1.6 0 H8.4 V2.8 H0 Z" fill="#c9c9c9"/><rect x="8.4" y="0" width="8" height="2.8" fill="#9b9b9b"/><path d="M16.4 0 H22.8 Q24.4 0 24.4 1.6 V2.8 H16.4 Z" fill="#6f6f6f"/>
<path d="M3.6 6.2 L9 10.2 L3.6 14.2" fill="none" stroke="#cfcfcf" stroke-width="2.3"/>
<rect x="11.4" y="13.2" width="7" height="1.8" fill="#fff"/>
</svg>
<div class="abs" style="left:655px;top:726px;width:38px;height:40px;background:#f9f9f9;border-radius:5px;box-shadow:0 0 0 1px #ebebeb;"></div>
<svg style="left:661px;top:732px;" width="25" height="26" viewBox="0 0 25 26">
<rect x="1.5" y="1.5" width="18.6" height="15.4" fill="#fbfbfd" stroke="#979cab" stroke-width="1"/>
<rect x="2" y="2" width="17.6" height="3.6" fill="#9ca2b2"/><rect x="2.8" y="2.6" width="10" height="1" fill="#eceef3"/><rect x="15" y="2.5" width="1.3" height="1.2" fill="#fff"/><rect x="17.2" y="2.5" width="1.3" height="1.2" fill="#fff"/>
<rect x="2" y="4.6" width="17.6" height="1" fill="#e6e8ee"/>
<rect x="6.6" y="6" width="1" height="10.6" fill="#979cab"/><rect x="3" y="7.6" width="2.4" height="0.9" fill="#8a92ae"/><rect x="3" y="9.6" width="2" height="0.9" fill="#b6bccf"/>
<path d="M8.4 12.6 C9.2 9.4 14.8 9.8 15.8 13.6" fill="none" stroke="#262626" stroke-width="1.5"/>
<path d="M2.2 14.4 L3.8 11.5 L19.4 12.1 L23.2 14.3 L20.6 16 Z" fill="#e2524c"/>
<path d="M2.2 14.4 L20.6 16 L20.4 24.8 L2.4 21.3 Z" fill="url(#tb1)"/>
<path d="M20.6 16 L23.2 14.3 L23.1 21.6 L20.4 24.8 Z" fill="#9a1212"/>
<path d="M2.4 17.6 L20.5 20" stroke="#d84a3a" stroke-width="0.6" opacity="0.7"/>
<rect x="6.2" y="16.4" width="1.8" height="3.2" rx="0.6" fill="#c9ccd2"/><rect x="13.8" y="17.6" width="1.8" height="3.2" rx="0.6" fill="#c9ccd2"/>
</svg>
<div class="abs" style="left:666px;top:761px;width:16px;height:3px;background:#0a67c9;border-radius:1.5px;"></div>
<div class="abs" style="left:539px;top:761px;width:6px;height:3px;background:#7d7d7d;border-radius:1.5px;"></div>
<div class="abs" style="left:583px;top:761px;width:6px;height:3px;background:#7d7d7d;border-radius:1.5px;"></div>
<div class="abs" style="left:627px;top:761px;width:6px;height:3px;background:#7d7d7d;border-radius:1.5px;"></div>
<svg style="left:764px;top:741px;" width="12" height="8" viewBox="0 0 12 8"><path d="M1 6.6 L6 1.6 L11 6.6" fill="none" stroke="#1f1f1f" stroke-width="1.3"/></svg>
<svg style="left:793px;top:737px;" width="18" height="16" viewBox="0 0 18 16"><path d="M4.6 12.4 C0.4 12.4 0.2 7.2 4 6.6 C4.4 2.4 10.4 1.6 11.8 5.4 C16.4 4.8 17.6 12.4 12.6 12.4 Z" fill="#bdbdbd" stroke="#2a2a2a" stroke-width="1.1"/><path d="M5 11.8 C2 11.8 1.6 8 4.6 7.4 C5 5 7.4 4 9 4.8 L12 11.8Z" fill="#8e8e8e" opacity="0.7"/><path d="M2 1 L16 14.6" stroke="#eeeeee" stroke-width="2.6"/><path d="M1.6 0.8 L15.6 14.6" stroke="#2a2a2a" stroke-width="1.1"/></svg>
<svg style="left:870px;top:736px;" width="17" height="18" viewBox="0 0 17 18"><path d="M11 1.6 H2.4 Q1 1.6 1 3 V11 Q1 12.4 2.4 12.4 H12.4" fill="none" stroke="#1f1f1f" stroke-width="1.2"/><path d="M5.2 12.4 V15.6 M9.8 12.4 V15.6 M3.6 15.8 H11.6" fill="none" stroke="#1f1f1f" stroke-width="1.2"/><rect x="12.6" y="0.8" width="3.4" height="5.6" rx="1.2" fill="none" stroke="#1f1f1f" stroke-width="1.1"/><path d="M12.6 3 H16" stroke="#1f1f1f" stroke-width="0.9"/><path d="M14.3 6.4 V16.6" stroke="#1f1f1f" stroke-width="1.2"/></svg>
<svg style="left:893px;top:739px;" width="17" height="12" viewBox="0 0 17 12"><path d="M1 3.8 H3.4 L7 0.9 V11.1 L3.4 8.2 H1 Z" fill="none" stroke="#1b1b1b" stroke-width="1.2" stroke-linejoin="round"/><path d="M10.8 3.4 L16 8.6 M16 3.4 L10.8 8.6" stroke="#1b1b1b" stroke-width="1.2"/></svg>
<svg style="left:990px;top:737px;" width="15" height="17" viewBox="0 0 15 17"><path d="M1 11.6 C2.6 10 2.4 8.4 2.6 6.2 C3 2.6 5 1.4 6.6 1.4 C8.4 1.4 10.2 2.6 10.6 6.2 C10.8 8.4 10.6 10 12.4 11.6 V12.4 H1 Z" fill="#1b1b1b"/><path d="M4.8 13.6 H8.6 Q6.7 16 4.8 13.6 Z" fill="#1b1b1b"/><path d="M4.6 5.2 H7.8 L4.6 9 H8" fill="none" stroke="#fff" stroke-width="1.1"/><path d="M10.2 1 H13.4 L10.2 4.4 H13.6" fill="none" stroke="#1b1b1b" stroke-width="1.2"/></svg>
<span class="t g" style="left:24px;top:5.84px;font-size:12px;letter-spacing:-0.121px;">Консоль1</span>
<span class="t g" style="left:80.4px;top:5.84px;font-size:12px;letter-spacing:0.500px;">-</span>
<span class="t g" style="left:88.4px;top:5.84px;font-size:12px;letter-spacing:0.024px;">[Корень</span>
<span class="t g" style="left:134.7px;top:5.84px;font-size:12px;letter-spacing:-0.065px;">консоли\Сертификаты</span>
<span class="t g" style="left:262.7px;top:5.84px;font-size:12px;letter-spacing:0.700px;">-</span>
<span class="t g" style="left:270.3px;top:5.84px;font-size:12px;letter-spacing:-0.058px;">текущий</span>
<span class="t g" style="left:320.8px;top:5.84px;font-size:12px;letter-spacing:-0.036px;">пользователь\Доверенные</span>
<span class="t g" style="left:472.8px;top:5.84px;font-size:12px;letter-spacing:0.023px;">корневые</span>
<span class="t g" style="left:530.7px;top:5.84px;font-size:12px;letter-spacing:-0.207px;">центры</span>
<span class="t g" style="left:574.4px;top:5.84px;font-size:12px;letter-spacing:-0.075px;">сертификации]</span>
<span class="t" style="left:27px;top:27.84px;font-size:12px;letter-spacing:-0.129px;">Файл</span>
<span class="t" style="left:72px;top:27.84px;font-size:12px;letter-spacing:-0.221px;">Действие</span>
<span class="t" style="left:139.5px;top:27.84px;font-size:12px;letter-spacing:-0.573px;">Вид</span>
<span class="t" style="left:175.5px;top:27.84px;font-size:12px;letter-spacing:0.019px;">Избранное</span>
<span class="t" style="left:252.5px;top:27.84px;font-size:12px;letter-spacing:0.152px;">Окно</span>
<span class="t" style="left:297px;top:27.84px;font-size:12px;letter-spacing:-0.225px;">Справка</span>
<span class="t" style="left:27px;top:79.84px;font-size:12px;letter-spacing:0.081px;">Корень консоли</span>
<span class="t" style="left:45.6px;top:97.84px;font-size:12px;letter-spacing:-0.407px;">Сертификаты</span>
<span class="t" style="left:123.6px;top:97.84px;font-size:12px;letter-spacing:1.800px;">-</span>
<span class="t" style="left:131.5px;top:97.84px;font-size:12px;letter-spacing:-0.000px;">текущий</span>
<span class="t" style="left:183px;top:97.84px;font-size:12px;letter-spacing:-0.037px;">пользователь</span>
<span class="t" style="left:65px;top:115.84px;font-size:12px;letter-spacing:0.198px;">Личное</span>
<span class="t" style="left:65px;top:133.84px;font-size:12px;letter-spacing:-0.055px;">Доверенные корневые центры сертификации</span>
<span class="t" style="left:65px;top:151.84px;font-size:12px;letter-spacing:-0.141px;">Доверительные отношения в предприятии</span>
<span class="t" style="left:65px;top:169.84px;font-size:12px;letter-spacing:0.285px;">Промежуточные центры сертификации</span>
<span class="t" style="left:65px;top:187.84px;font-size:12px;letter-spacing:-0.033px;">Объект пользователя Active Directory</span>
<span class="t" style="left:65px;top:205.84px;font-size:12px;letter-spacing:-0.055px;">Доверенные издатели</span>
<span class="t" style="left:65px;top:223.84px;font-size:12px;letter-spacing:-0.251px;">Сертификаты, к которым нет доверия</span>
<span class="t" style="left:65px;top:241.84px;font-size:12px;letter-spacing:0.052px;">Сторонние ко</span>
<span class="t" style="left:65px;top:259.84px;font-size:12px;letter-spacing:-0.055px;">Доверенные лица</span>
<span class="t" style="left:65px;top:277.84px;font-size:12px;letter-spacing:0.043px;">Поставщики сертификатов проверки подлинности клиентов</span>
<span class="t" style="left:65px;top:295.84px;font-size:12px;letter-spacing:-0.055px;">Доверенные корневые сертификаты смарт-карты</span>
<span class="t" style="left:423.5px;top:82.84px;font-size:12px;letter-spacing:-0.118px;">Тип объекта</span>
<span class="t" style="left:439.5px;top:104.84px;font-size:12px;letter-spacing:-0.207px;">Сертификаты</span>
<span class="t" style="left:880px;top:81.84px;font-size:12px;letter-spacing:-0.070px;font-weight:bold;">Действия</span>
<span class="t" style="left:882px;top:105.84px;font-size:12px;letter-spacing:-0.059px;">Доверенные корне...</span>
<span class="t" style="left:906px;top:129.54px;font-size:12px;letter-spacing:0.020px;">Дополнительн...</span>
<span class="t" style="left:4px;top:703.84px;font-size:12px;letter-spacing:-0.020px;">Перечень</span>
<span class="t" style="left:60px;top:703.84px;font-size:12px;letter-spacing:-0.356px;">действий,</span>
<span class="t" style="left:115.7px;top:703.84px;font-size:12px;letter-spacing:0.170px;">которые</span>
<span class="t" style="left:166.7px;top:703.84px;font-size:12px;letter-spacing:0.321px;">могут</span>
<span class="t" style="left:202.4px;top:703.84px;font-size:12px;letter-spacing:-0.263px;">быть</span>
<span class="t" style="left:232.1px;top:703.84px;font-size:12px;letter-spacing:0.103px;">выполнены</span>
<span class="t" style="left:299.4px;top:703.84px;font-size:12px;letter-spacing:0.400px;">с</span>
<span class="t" style="left:308.3px;top:703.84px;font-size:12px;letter-spacing:-0.252px;">данным</span>
<span class="t" style="left:355px;top:703.84px;font-size:12px;letter-spacing:0.028px;">элементом.</span>
<span class="t g" style="left:31.8px;top:729.02px;font-size:11.5px;letter-spacing:-0.609px;color:#1b1b1b;">-17°</span>
<span class="t g" style="left:828.8px;top:739.02px;font-size:11.5px;letter-spacing:-0.741px;color:#1b1b1b;">ENG</span>
<span class="t g" style="left:931.3px;top:729.52px;font-size:11.5px;letter-spacing:0.351px;color:#1b1b1b;">11:11 AM</span>
<span class="t g" style="left:927.2px;top:745.02px;font-size:11.5px;letter-spacing:0.336px;color:#1b1b1b;">2/20/2026</span>
<div class="menu" style="left:143px;top:137px;width:243px;height:227px;"></div>
<div class="abs" style="left:149px;top:171px;width:232px;height:22px;background:#f0f0f0;border-radius:4px;"></div>
<div class="sep" style="left:152px;top:166px;width:225px;"></div>
<div class="sep" style="left:152px;top:197px;width:225px;"></div>
<div class="sep" style="left:152px;top:250px;width:225px;"></div>
<div class="sep" style="left:152px;top:281px;width:225px;"></div>
<div class="sep" style="left:152px;top:334px;width:225px;"></div>
<svg style="left:362px;top:176px;" width="10" height="12" viewBox="0 0 10 12"><path d="M3 2.2 L7.2 6.3 L3 10.4" fill="none" stroke="#2b2b2b" stroke-width="1.2"/></svg>
<svg style="left:362px;top:207px;" width="10" height="12" viewBox="0 0 10 12"><path d="M3 2.2 L7.2 6.3 L3 10.4" fill="none" stroke="#2b2b2b" stroke-width="1.2"/></svg>
<div class="menu" style="left:380px;top:168px;width:222px;height:59px;"></div>
<div class="sep" style="left:389px;top:197px;width:204px;"></div>
<span class="t" style="left:181px;top:143.84px;font-size:12px;letter-spacing:-0.056px;">Поиск сертификатов...</span>
<span class="t" style="left:181px;top:174.84px;font-size:12px;letter-spacing:-0.416px;">Все задачи</span>
<span class="t" style="left:181px;top:205.84px;font-size:12px;letter-spacing:-0.573px;">Вид</span>
<span class="t" style="left:181px;top:227.84px;font-size:12px;letter-spacing:0.023px;">Новое окно отсюда</span>
<span class="t" style="left:181px;top:258.84px;font-size:12px;letter-spacing:-0.158px;">Новый вид панели задач...</span>
<span class="t" style="left:181px;top:289.84px;font-size:12px;letter-spacing:-0.043px;">Обновить</span>
<span class="t" style="left:181px;top:311.84px;font-size:12px;letter-spacing:-0.014px;">Экспортировать список...</span>
<span class="t" style="left:181px;top:342.84px;font-size:12px;letter-spacing:-0.225px;">Справка</span>
<span class="t" style="left:418px;top:174.84px;font-size:12px;letter-spacing:-0.047px;">Поиск сертификатов...</span>
<span class="t" style="left:418px;top:205.84px;font-size:12px;letter-spacing:0.242px;">Импорт...</span>

</body>
</html>
